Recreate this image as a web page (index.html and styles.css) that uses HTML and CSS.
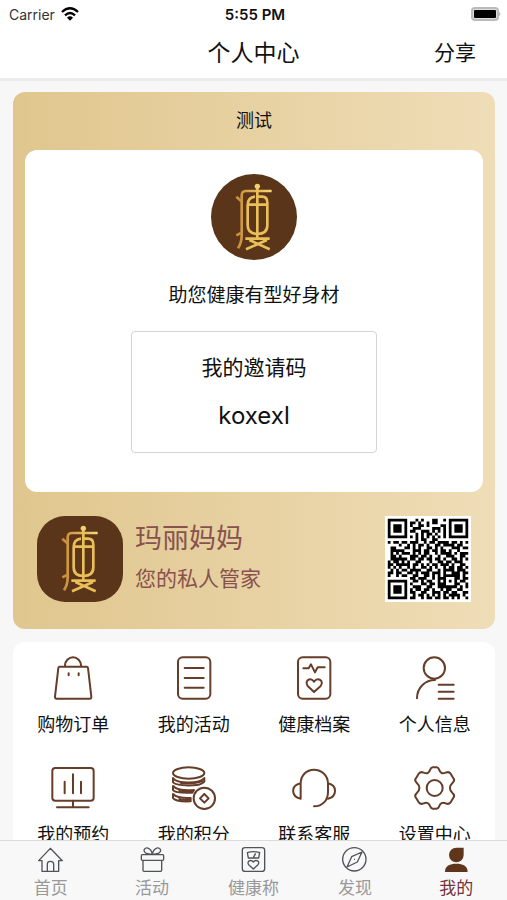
FILE: index.html
```html
<!DOCTYPE html>
<html lang="zh-CN">
<head>
  <meta charset="UTF-8" />
  <meta name="viewport" content="width=device-width, initial-scale=1.0"/>
  <title>个人中心</title>
  <link rel="stylesheet" href="styles.css">
</head>
<body>
  <svg class="defs" width="0" height="0" aria-hidden="true">
    <defs>
      <linearGradient id="gold" x1="0" y1="0" x2="1" y2="0">
        <stop offset="0" stop-color="#c98f3c"/>
        <stop offset="1" stop-color="#f6d873"/>
      </linearGradient>
      <symbol id="logo" viewBox="0 0 258 258">
        <g fill="none" stroke="#eabf5a" stroke-width="8">
          <path stroke="url(#gold)" d="M182 51H104Q92 51 92 65V184Q92 206 81 223"/>
          <path stroke="#c98f3c" d="M76 68L91 82M76 184L90 177"/>
          <path d="M132 68Q110 70 110 94V154Q110 180 139 180Q169 180 169 154V86Q169 68 153 68H139M112 92H169M139 38V194M103 194H176M115 198L176 226M168 198L105 226"/>
        </g>
        <circle cx="139" cy="37" r="8" fill="#f2d070"/>
      </symbol>
    </defs>
  </svg>

  <div class="app">
    <div class="status-bar">
      <div class="carrier">
        <span>Carrier</span>
        <svg class="wifi" viewBox="0 0 54 42"><g fill="none" stroke="#000" stroke-width="7"><path d="M3 15Q27 -7 51 15"/><path d="M12 25Q27 11 42 25"/></g><path d="M18 32Q27 24 36 32L27 41z"/></svg>
      </div>
      <div class="time">5:55 PM</div>
      <svg class="battery" viewBox="0 0 30 14"><rect x="1" y="1" width="26" height="12" rx="3" fill="#ddd" stroke="#bbb" stroke-width="2"/><rect x="3" y="3" width="22" height="8" rx="1"/><path d="M28 5Q31 7 28 9z" fill="#b5b5b5"/></svg>
    </div>

    <header class="header">
      <h1>个人中心</h1>
      <button class="share-btn">分享</button>
    </header>

    <main class="content">
      <section class="card">
        <h2 class="card-title">测试</h2>
        <div class="invite">
          <svg class="logo round"><use href="#logo"/></svg>
          <p class="slogan">助您健康有型好身材</p>
          <div class="code-box">
            <div class="code-label">我的邀请码</div>
            <div class="code">koxexl</div>
          </div>
        </div>
        <div class="manager">
          <svg class="logo"><use href="#logo"/></svg>
          <div class="manager-info">
            <div class="manager-name">玛丽妈妈</div>
            <div class="manager-role">您的私人管家</div>
          </div>
          <svg class="qr" id="qr" viewBox="-1 -1 31 31"></svg>
        </div>
      </section>

      <nav class="menu">
        <a href="#orders">
          <svg viewBox="0 0 132 132"><path d="M26 32H107Q110 32 111 36L121 122Q121 128 116 128H17Q12 128 12 122L22 36Q23 32 26 32zM42 32V28a24 24 0 0 1 48 0V32M53 52V58M83 52V58"/></svg>
          <span>购物订单</span>
        </a>
        <a href="#activities">
          <svg viewBox="0 0 132 132"><rect x="18" y="4" width="97" height="124" rx="14"/><path d="M38 36H95M38 66H95M38 95H95"/></svg>
          <span>我的活动</span>
        </a>
        <a href="#health">
          <svg viewBox="0 0 132 132"><rect x="18" y="4" width="97" height="124" rx="14"/><path d="M34 37H50L57 25L69 49L77 34H98M66 108L47 90C36 74 56 62 66 77C76 62 98 74 86 90z"/></svg>
          <span>健康档案</span>
        </a>
        <a href="#profile">
          <svg viewBox="0 0 132 132"><circle cx="64" cy="36" r="32"/><path d="M12 127C12 93 38 72 66 72M77 86H122M77 107H122M77 128H122"/></svg>
          <span>个人信息</span>
        </a>
        <a href="#booking">
          <svg viewBox="0 0 132 132"><rect x="4" y="6" width="124" height="98" rx="9"/><path d="M66 104V124M18 124H113M41 47V82M66 25V82M90 47V82"/></svg>
          <span>我的预约</span>
        </a>
        <a href="#points">
          <svg viewBox="0 0 132 132">
            <ellipse cx="50" cy="21" rx="47" ry="17"/>
            <path d="M3 36C14 53 82 55 97 36V47C92 53 86 55 80 56C47 61 8 57 3 49zM3 60C14 72 40 74 66 72L61 80C36 81 8 80 3 72zM3 84C14 95 38 97 56 96V106C34 107 8 104 3 96z"/>
            <path d="M26 50Q50 57 92 46M22 75Q40 80 60 76M22 99Q38 103 54 101"/>
            <circle cx="97" cy="97" r="32"/><path d="M97 84L110 97L97 110L84 97z"/>
          </svg>
          <span>我的积分</span>
        </a>
        <a href="#service">
          <svg viewBox="0 0 132 132"><path d="M26 97V53C26 28 44 11 66 11S108 28 108 53V78C108 104 91 121 66 121M26 52C-4 58 -4 91 26 98M108 52C136 58 136 91 108 98"/></svg>
          <span>联系客服</span>
        </a>
        <a href="#settings">
          <svg viewBox="0 0 132 132"><path d="M52 10Q54 4 60 4H70Q76 4 78 10C82 22 88 24 98 20Q108 16 112 22L122 38Q126 44 119 50C108 60 108 72 119 82Q126 88 122 94L112 110Q107 116 98 112C88 108 82 111 78 122Q76 128 70 128H60Q54 128 52 122C48 111 42 108 32 112Q23 116 18 110L8 94Q4 88 11 82C22 72 22 60 11 50Q4 44 8 38L18 22Q23 16 32 20C42 24 48 22 52 10z"/><circle cx="65" cy="66" r="24"/></svg>
          <span>设置中心</span>
        </a>
      </nav>
    </main>

    <nav class="tabbar">
      <a href="#home">
        <svg viewBox="0 0 75 75"><path d="M12 41H2L37 4L73 41H62V73H12zM28 73V51Q28 43 37 43T47 51V73"/></svg>
        <span>首页</span>
      </a>
      <a href="#events">
        <svg viewBox="0 0 75 75"><rect x="4" y="23" width="67" height="17" rx="3"/><path d="M9 40V70Q9 73 12 73H62Q65 73 65 70V40M37 22C27 22 12 20 12 10C14 -2 33 0 37 22C41 0 60 -2 62 10C62 20 47 22 37 22z"/></svg>
        <span>活动</span>
      </a>
      <a href="#scale">
        <svg viewBox="0 0 75 75"><rect x="4" y="2" width="67" height="71" rx="8"/><path d="M19 17Q37 11 56 17L53 33H22zM37 32L44 19M37 66L23 53C16 43 30 36 37 45C44 36 59 43 51 53z"/></svg>
        <span>健康称</span>
      </a>
      <a href="#discover">
        <svg viewBox="0 0 75 75"><circle cx="37" cy="37" r="35"/><path d="M60 15L46 45L15 60L29 29zM36 37H39"/></svg>
        <span>发现</span>
      </a>
      <a href="#mine" class="active">
        <svg viewBox="0 0 75 75"><path d="M37 2H59V24A22 22 0 1 1 37 2zM3 75C3 56 18 50 37 50S71 56 71 75z"/></svg>
        <span>我的</span>
      </a>
    </nav>
  </div>

  <script>
    // one string per row, # is a dark module
    const rows = [
      '#######...#.#...##..#.#######',
      '#.....#.##.#..#.##....#.....#',
      '#.###.#.#..##.#....##.#.###.#',
      '#.###.#..###....###.#.#.###.#',
      '#.###.#.##..###.#.#.#.#.###.#',
      '#.....#...#.#.##.#..#.#.....#',
      '#######.#.#.#.#.#.#.#.#######',
      '..........#.##..##...........',
      '#.##.##.###..#.##.####.##.#.#',
      '....#..#.#.##.#..##.####.##..',
      '.##...##.#.#..##.#.#...###.##',
      '.#####...###.##.##.##.#..#...',
      '.#.#.###.#.#.##..#.####.#.###',
      '.##.#...###.##.#..#..###..##.',
      '.######.##.##.##.##.#..##.#.#',
      '#.##.#.#..##...#..##.##.###..',
      '##.#####.##.#.#.##.###.#..##.',
      '#.#.#..#.#..##.#.#..#.##.##.#',
      '.#.#.##.####..##..#.####.###.',
      '##.##..##.#.###.###.#..###.##',
      '#..#.##..##..##.#.#.######.#.',
      '........##.###..#.###...##.##',
      '#######..##.#.##..#.#.#.#.##.',
      '#.....#.#...##.##.###...##..#',
      '#.###.#..###..##..#######.#.#',
      '#.###.#.#.##.##.#..#.##..##..',
      '#.###.#.##..##..###.##.##..##',
      '#.....#..#.##.#.#.#.#.####.#.',
      '#######.##..#.##.##.##.#.#..#'
    ];
    let path = '';
    rows.forEach((row, y) => {
      for (let x = 0; x < row.length; x++) {
        if (row[x] === '#') path += `M${x} ${y}h1v1h-1z`;
      }
    });
    document.getElementById('qr').innerHTML = `<path d="${path}"/>`;
  </script>
</body>
</html>
```

FILE: styles.css
```css
* {
  box-sizing: border-box;
}
body {
  margin: 0;
  font-family: Inter, "Noto Sans CJK SC", sans-serif;
  background-color: #f7f7f7;
  color: #111;
}
h1, h2, p {
  margin: 0;
  font-weight: normal;
}
a {
  color: inherit;
  text-decoration: none;
}
.defs {
  position: absolute;
}
.app {
  display: flex;
  flex-direction: column;
  height: 100vh;
}
.status-bar {
  display: grid;
  grid-template-columns: 1fr auto 1fr;
  align-items: center;
  height: 28px;
  padding: 0 6px 0 9px;
  background-color: #fff;
  font-size: 14px;
}
.carrier {
  display: flex;
  align-items: center;
  gap: 6px;
  color: #333;
}
.wifi {
  width: 18px;
  height: 14px;
}
.time {
  font-size: 15px;
  font-weight: 600;
}
.battery {
  width: 30px;
  height: 14px;
  justify-self: end;
}
.header {
  display: grid;
  grid-template-columns: 1fr auto 1fr;
  align-items: center;
  height: 53px;
  padding: 0 31px;
  background-color: #fff;
  border-bottom: 3px solid #ebebeb;
}
.header h1 {
  grid-column: 2;
  font-size: 23px;
  line-height: 32px;
}
.share-btn {
  justify-self: end;
  padding: 0;
  border: none;
  background: none;
  color: inherit;
  font-family: inherit;
  font-size: 21px;
  line-height: 32px;
  cursor: pointer;
}
.content {
  flex: 1;
  min-height: 0;
  padding: 11px 12px 0 13px;
  overflow-y: auto;
  scrollbar-width: none;
}
.card {
  padding: 0 12px 27px;
  border-radius: 12px;
  background: linear-gradient(to right, #e0c68e, #efddb7);
}
.card-title {
  font-size: 18px;
  line-height: 58px;
  text-align: center;
}
.invite {
  display: flex;
  flex-direction: column;
  align-items: center;
  padding: 24px 24px 39px;
  border-radius: 12px;
  background-color: #fff;
}
.logo {
  width: 86px;
  height: 86px;
  flex-shrink: 0;
  border-radius: 28px;
  background-color: #5a351a;
}
.logo.round {
  border-radius: 50%;
}
.slogan {
  padding: 22px 0;
  font-size: 19px;
  line-height: 27px;
}
.code-box {
  width: 60%;
  padding: 20px 0;
  border: 1px solid #d4d4d4;
  border-radius: 4px;
  text-align: center;
}
.code-label {
  font-size: 21px;
  line-height: 32px;
}
.code {
  padding-top: 16px;
  font-size: 24px;
  line-height: 32px;
}
.manager {
  display: flex;
  align-items: center;
  gap: 12px;
  padding: 24px 12px 0;
}
.manager-info {
  flex: 1;
  color: #88524e;
}
.manager-name {
  font-size: 27px;
  line-height: 40px;
}
.manager-role {
  font-size: 21px;
  line-height: 40px;
}
.qr {
  width: 86px;
  height: 86px;
  background-color: #fff;
}
.menu {
  display: grid;
  grid-template-columns: repeat(4, 1fr);
  row-gap: 24px;
  margin-top: 13px;
  padding: 14px 0 20px;
  border-radius: 12px;
  background-color: #fff;
}
.menu a {
  display: flex;
  flex-direction: column;
  align-items: center;
  gap: 8px;
  font-size: 18px;
  line-height: 34px;
}
.menu svg {
  width: 44px;
  height: 44px;
  fill: none;
  stroke: #653d29;
  stroke-width: 6;
  stroke-linecap: round;
  stroke-linejoin: round;
}
.tabbar {
  display: flex;
  height: 60px;
  padding-top: 6px;
  border-top: 1px solid #dcdcdc;
  background-color: #f8f8f8;
}
.tabbar a {
  display: flex;
  flex: 1;
  flex-direction: column;
  align-items: center;
  gap: 5px;
  color: #999;
  font-size: 17px;
  line-height: 23px;
}
.tabbar svg {
  flex-shrink: 0;
  width: 25px;
  height: 25px;
  fill: none;
  stroke: #505357;
  stroke-width: 4;
  stroke-linejoin: round;
}
.tabbar .active {
  color: #76323a;
}
.tabbar .active svg {
  fill: #5f361b;
  stroke: none;
}
```
